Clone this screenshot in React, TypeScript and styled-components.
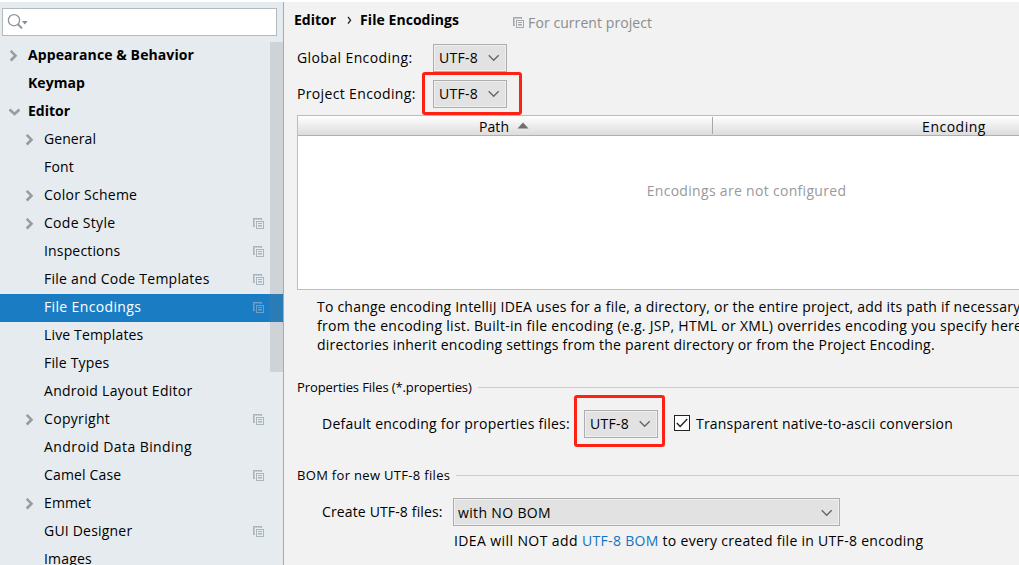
import React from "react";
import styled, { createGlobalStyle, css } from "styled-components";

const GlobalStyle = createGlobalStyle`
  * { box-sizing: border-box; }
  body {
    margin: 0;
    background: #fff;
    color: #000;
    font: 14px/20px "Open Sans", "Noto Sans", sans-serif;
    overflow: hidden;
  }
`;

const Window = styled.div`
  display: flex;
  width: 1019px;
  height: 565px;
  padding-top: 2px;
  overflow: hidden;
`;

const Text = styled.span<{ $ls?: number }>`
  white-space: pre;
  letter-spacing: ${(p) => p.$ls ?? 0}px;
`;

/* Sidebar */

const Sidebar = styled.aside`
  position: relative;
  flex: none;
  width: 284px;
  height: 563px;
  overflow: hidden;
  background: #e5ebef;
  border-right: 1px solid #aaaaaa;
`;

const SearchBox = styled.div`
  display: flex;
  align-items: flex-start;
  width: 275px;
  height: 28px;
  margin: 6px 0 6px 2px;
  padding: 4px;
  background: #fff;
  border: 1px solid #b4b9bc;
`;

const TreeRow = styled.div<{ $level: number; $selected?: boolean }>`
  display: flex;
  align-items: center;
  height: 28px;
  padding-left: ${(p) => (p.$level ? 24 : 8)}px;
  padding-right: 19px;
  ${(p) =>
    p.$level === 0 &&
    css`
      font-weight: 700;
    `}
  ${(p) =>
    p.$selected &&
    css`
      background: #1a7dc4;
      color: #fff;
    `}
`;

const ArrowSlot = styled.span`
  display: flex;
  flex: none;
  width: 20px;
  height: 12px;
`;

const RowLabel = styled(Text)`
  flex: 1;
  margin-bottom: 2px;
`;

const RowBadge = styled.span`
  display: flex;
  margin-bottom: 1px;
`;

const ScrollThumb = styled.div`
  position: absolute;
  top: 40px;
  right: 0;
  width: 13px;
  height: 330px;
  background: rgba(115, 115, 125, 0.2);
`;

/* Main panel */

const Main = styled.main`
  flex: none;
  display: flex;
  flex-direction: column;
  width: 912px;
  height: 563px;
  padding-left: 13px;
  background: #f2f2f2;
`;

const Header = styled.header`
  display: flex;
  align-items: flex-start;
  height: 42px;
  padding-top: 8px;
  margin-left: -3px;
  font-weight: 700;
`;

const Separator = styled.svg`
  margin: 6px 8px 0 11px;
`;

const ScopeNote = styled.div`
  display: flex;
  align-items: center;
  gap: 4px;
  margin: 3px 0 0 54px;
  font-weight: 400;
  color: #8c8c8c;

  svg {
    margin-bottom: 1px;
  }
`;

const FormRow = styled.div<{ $indent?: number; $gap?: number }>`
  display: flex;
  align-items: center;
  height: 28px;
  margin-bottom: ${(p) => p.$gap ?? 0}px;
  padding-left: ${(p) => p.$indent ?? 0}px;
`;

const FieldLabel = styled(Text)<{ $width: number }>`
  flex: none;
  width: ${(p) => p.$width}px;
`;

const Combo = styled.div<{ $width: number }>`
  display: flex;
  flex: none;
  align-items: center;
  justify-content: space-between;
  width: ${(p) => p.$width}px;
  height: 28px;
  padding: 0 6px 0 5px;
  background: #e2e2e2;
  border: 1px solid #adadad;
  box-shadow: inset 0 0 0 1px #f0f0f0;
`;

const WideCombo = styled(Combo)`
  padding: 1px 6px 0 4px;
`;

const ComboAnchor = styled.div`
  position: relative;
  flex: none;
`;

const Highlight = styled.div<{ $t: number; $r: number; $b: number; $l: number }>`
  position: absolute;
  top: ${(p) => -p.$t}px;
  right: ${(p) => -p.$r}px;
  bottom: ${(p) => -p.$b}px;
  left: ${(p) => -p.$l}px;
  border: 3px solid #ff2114;
  border-radius: 3px;
`;

const Table = styled.section`
  display: flex;
  flex: none;
  flex-direction: column;
  width: 899px;
  height: 175px;
  margin-bottom: 7px;
  background: #fff;
  border: 1px solid #bdbdbd;
`;

const TableHead = styled.div`
  display: flex;
  flex: none;
  align-items: center;
  height: 20px;
  background: linear-gradient(#ffffff, #dcdcdc);
  border-bottom: 1px solid #b0b0b0;
`;

const HeadCell = styled.div<{ $width?: number; $divider?: boolean }>`
  display: flex;
  align-items: center;
  justify-content: center;
  gap: 8px;
  height: 17px;
  padding-top: 3px;
  padding-right: ${(p) => (p.$divider ? 2 : 0)}px;
  flex: ${(p) => (p.$width ? "none" : "1")};
  width: ${(p) => (p.$width ? `${p.$width}px` : "auto")};
  border-right: ${(p) => (p.$divider ? "1px solid #a8a8a8" : "none")};

  svg {
    margin-bottom: 3px;
  }
`;

const EmptyNote = styled.div`
  display: flex;
  justify-content: center;
  padding-top: 45px;
  color: #999;
`;

const Description = styled.div`
  display: flex;
  flex-direction: column;
  flex: none;
  height: 81px;
  padding-left: 20px;
  line-height: 19px;
`;

const GroupTitle = styled.div<{ $after: number }>`
  display: flex;
  align-items: center;
  flex: none;
  height: 18px;
  margin-bottom: ${(p) => p.$after}px;
  font-size: 13px;
  line-height: 18px;

  &::after {
    content: "";
    flex: 1;
    height: 1px;
    background: #cdcdcd;
  }
`;

const GroupLabel = styled(Text)<{ $width: number }>`
  width: ${(p) => p.$width}px;
`;

const CheckBox = styled.span`
  display: flex;
  flex: none;
  width: 16px;
  height: 16px;
  margin: 0 6px 2px 16px;
  background: #fff;
  border: 1px solid #222;
`;

const Hint = styled.div`
  padding-left: 157px;
  margin-top: 5px;
`;

const Link = styled.span`
  color: #1272c4;
`;

function CopyIcon({ color = "#a9b5bc", inner = "#c3ccd2" }: { color?: string; inner?: string }) {
  return (
    <svg width="11" height="11" viewBox="0 0 11 11" shapeRendering="crispEdges" fill="none">
      <path d="M0 0H9V2H2V9H0Z" fill={inner} />
      <path d="M2 8.5H.5V.5H8.5V2" stroke={color} />
      <path d="M3.5 3.5H10.5V10.5H3.5Z" stroke={color} />
      <path d="M5 5.5H9M5 7.5H9" stroke={color} />
      <path d="M5 8.5H9" stroke={inner} />
    </svg>
  );
}

function TreeArrow({ open }: { open?: boolean }) {
  return open ? (
    <svg width="12" height="12" viewBox="0 0 12 12" fill="none">
      <path d="M1.5 3.6L6.5 8L11.5 3.6" stroke="#999c9f" strokeWidth="2.6" />
    </svg>
  ) : (
    <svg width="12" height="12" viewBox="0 0 12 12" fill="none">
      <path d="M2.7 0.9L7.5 5.7L2.7 10.5" stroke="#999c9f" strokeWidth="2.6" />
    </svg>
  );
}

function ComboArrow() {
  return (
    <svg width="12" height="8" viewBox="0 0 12 8" fill="none">
      <path d="M0.7 1.3L5.7 6.2L10.7 1.3" stroke="#666" strokeWidth="1.4" />
    </svg>
  );
}

type Item = {
  label: string;
  ls: number;
  level?: number;
  arrow?: "open" | "closed";
  copy?: boolean;
  selected?: boolean;
};

const items: Item[] = [
  { label: "Appearance & Behavior", ls: 0.097, level: 0, arrow: "closed" },
  { label: "Keymap", ls: 0.05, level: 0 },
  { label: "Editor", ls: 0, level: 0, arrow: "open" },
  { label: "General", ls: 0.07, arrow: "closed" },
  { label: "Font", ls: 0.19 },
  { label: "Color Scheme", ls: 0.25, arrow: "closed" },
  { label: "Code Style", ls: 0.3, arrow: "closed", copy: true },
  { label: "Inspections", ls: 0.16, copy: true },
  { label: "File and Code Templates", ls: 0.26, copy: true },
  { label: "File Encodings", ls: 0.36, copy: true, selected: true },
  { label: "Live Templates", ls: 0.15 },
  { label: "File Types", ls: 0.17 },
  { label: "Android Layout Editor", ls: 0.28 },
  { label: "Copyright", ls: 0.32, arrow: "closed", copy: true },
  { label: "Android Data Binding", ls: 0.42 },
  { label: "Camel Case", ls: 0.16, copy: true },
  { label: "Emmet", ls: 0.1, arrow: "closed" },
  { label: "GUI Designer", ls: 0.2, copy: true },
  { label: "Images", ls: 0.2 },
];

function EncodingCombo() {
  return (
    <Combo $width={74}>
      <Text $ls={0.27}>UTF-8</Text>
      <ComboArrow />
    </Combo>
  );
}

export default function App() {
  return (
    <>
      <GlobalStyle />
      <Window>
        <Sidebar>
          <SearchBox>
            <svg width="22" height="18" viewBox="0 0 22 18" fill="none">
              <circle cx="7" cy="7.2" r="5.6" stroke="#8a959e" strokeWidth="1.3" />
              <path d="M10.8 11.2L15 15.4" stroke="#8a959e" strokeWidth="2" />
              <path d="M15 8H20.6L17.8 11.6Z" fill="#7f8b94" />
            </svg>
          </SearchBox>
          {items.map((it) => (
            <TreeRow key={it.label} $level={it.level ?? 1} $selected={it.selected}>
              <ArrowSlot>{it.arrow && <TreeArrow open={it.arrow === "open"} />}</ArrowSlot>
              <RowLabel $ls={it.ls}>{it.label}</RowLabel>
              {it.copy && (
                <RowBadge>
                  {it.selected ? <CopyIcon color="#6f9fc4" inner="#4a8cc0" /> : <CopyIcon />}
                </RowBadge>
              )}
            </TreeRow>
          ))}
          <ScrollThumb />
        </Sidebar>

        <Main>
          <Header>
            <Text>Editor</Text>
            <Separator width="5" height="9" viewBox="0 0 5 9" fill="none">
              <path d="M1 1L3.6 4.2L1 7.6" stroke="#222" strokeWidth="1.3" />
            </Separator>
            <Text $ls={0.054}>File Encodings</Text>
            <ScopeNote>
              <CopyIcon color="#a5a9ac" inner="#c5c8ca" />
              <Text $ls={0.073}>For current project</Text>
            </ScopeNote>
          </Header>

          <FormRow $gap={8}>
            <FieldLabel $width={136} $ls={0.4}>Global Encoding:</FieldLabel>
            <EncodingCombo />
          </FormRow>
          <FormRow $gap={7}>
            <FieldLabel $width={136} $ls={0.35}>Project Encoding:</FieldLabel>
            <ComboAnchor>
              <EncodingCombo />
              <Highlight $t={8} $r={15} $b={7} $l={11} />
            </ComboAnchor>
          </FormRow>

          <Table>
            <TableHead>
              <HeadCell $width={415} $divider>
                <Text $ls={0.1}>Path</Text>
                <svg width="12" height="7" viewBox="0 0 12 7">
                  <path d="M0.5 6.5L6 0.5L11.5 6.5Z" fill="#6e6e6e" />
                </svg>
              </HeadCell>
              <HeadCell>
                <Text $ls={0.5}>Encoding</Text>
              </HeadCell>
            </TableHead>
            <EmptyNote>
              <Text $ls={0.31}>Encodings are not configured</Text>
            </EmptyNote>
          </Table>

          <Description>
            <Text $ls={0.22}>To change encoding IntelliJ IDEA uses for a file, a directory, or the entire project, add its path if necessary</Text>
            <Text $ls={0.29}>from the encoding list. Built-in file encoding (e.g. JSP, HTML or XML) overrides encoding you specify here</Text>
            <Text $ls={0.206}>directories inherit encoding settings from the parent directory or from the Project Encoding.</Text>
          </Description>

          <GroupTitle $after={14}>
            <GroupLabel $width={181} $ls={-0.1}>Properties Files (*.properties)</GroupLabel>
          </GroupTitle>
          <FormRow $indent={25} $gap={28}>
            <FieldLabel $width={262} $ls={0.24}>Default encoding for properties files:</FieldLabel>
            <ComboAnchor>
              <EncodingCombo />
              <Highlight $t={15} $r={7} $b={9} $l={10} />
            </ComboAnchor>
            <CheckBox>
              <svg width="14" height="14" viewBox="0 0 14 14" fill="none">
                <path d="M1.8 7L5.2 10.4L12.2 3" stroke="#222" strokeWidth="1.4" />
              </svg>
            </CheckBox>
            <Text $ls={0.205}>Transparent native-to-ascii conversion</Text>
          </FormRow>

          <GroupTitle $after={14}>
            <GroupLabel $width={159} $ls={0.32}>BOM for new UTF-8 files</GroupLabel>
          </GroupTitle>
          <FormRow $indent={25}>
            <FieldLabel $width={131} $ls={0.14}>Create UTF-8 files:</FieldLabel>
            <WideCombo $width={387}>
              <Text $ls={0.35}>with NO BOM</Text>
              <ComboArrow />
            </WideCombo>
          </FormRow>
          <Hint>
            <Text $ls={0.4}>IDEA will NOT add </Text>
            <Link>
              <Text $ls={0.32}>UTF-8 BOM</Text>
            </Link>
            <Text $ls={0.29}> to every created file in UTF-8 encoding</Text>
          </Hint>
        </Main>
      </Window>
    </>
  );
}
